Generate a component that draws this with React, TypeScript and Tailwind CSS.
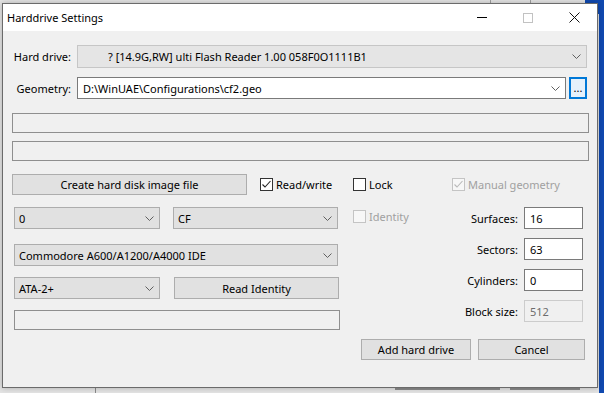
import React from "react";

const font = { fontFamily: '"Noto Sans", "Open Sans", sans-serif' };

function Chevron({ color = "#606060" }: { color?: string }) {
  return (
    <svg width="9" height="5" viewBox="0 0 9 5" className="shrink-0">
      <polyline points="0.5,0.5 4.5,4.5 8.5,0.5" fill="none" stroke={color} strokeWidth="1" />
    </svg>
  );
}

function Combo({
  w,
  text,
  variant = "grey",
  h = 22,
  textPad = 4,
}: {
  w: number;
  text: string;
  variant?: "grey" | "white" | "hd";
  h?: number;
  textPad?: number;
}) {
  const cls =
    variant === "white"
      ? "bg-white border-[#7a7a7a]"
      : variant === "hd"
      ? "bg-[#e5e5e5] border-[#c6c6c6]"
      : "bg-[#e1e1e1] border-[#adadad]";
  return (
    <div
      className={`flex items-center justify-between border pr-[5px] text-[11px] text-black ${cls}`}
      style={{ width: w, height: h, paddingLeft: textPad }}
    >
      <span className="whitespace-nowrap leading-none">{text}</span>
      <Chevron />
    </div>
  );
}

function Button({ w, text, h = 21 }: { w: number; text: string; h?: number }) {
  return (
    <div
      className="flex items-center justify-center border border-[#adadad] bg-[#e1e1e1] text-[11px] text-black"
      style={{ width: w, height: h }}
    >
      <span className="whitespace-nowrap leading-none">{text}</span>
    </div>
  );
}

function Check({
  checked,
  disabled,
  label,
}: {
  checked?: boolean;
  disabled?: boolean;
  label: string;
}) {
  const border = disabled ? "border-[#c4c4c4] bg-[#f7f7f7]" : "border-[#333333] bg-white";
  const mark = disabled ? "#b9b9b9" : "#222222";
  return (
    <div className="flex items-center gap-[3px]">
      <div className={`flex h-[13px] w-[13px] items-center justify-center border ${border}`}>
        {checked && (
          <svg width="11" height="11" viewBox="0 0 11 11">
            <polyline points="1.5,5.5 4,8 9.5,2" fill="none" stroke={mark} strokeWidth="1.1" />
          </svg>
        )}
      </div>
      <span className={`whitespace-nowrap text-[11px] leading-none ${disabled ? "text-[#a0a0a0]" : "text-black"}`}>
        {label}
      </span>
    </div>
  );
}

function Field({ w, h = 20 }: { w: number; h?: number }) {
  return <div className="border border-[#8f8f8f] bg-[#f0f0f0]" style={{ width: w, height: h }} />;
}

function NumRow({ label, value, disabled }: { label: string; value: string; disabled?: boolean }) {
  return (
    <div className="flex items-center justify-end gap-[6px]">
      <span className="whitespace-nowrap text-[11px] leading-none text-black">{label}</span>
      <div
        className={`flex h-[22px] w-[59px] items-center border pl-[5px] text-[11px] ${
          disabled ? "border-[#cccccc] bg-[#f0f0f0] text-[#6d6d6d]" : "border-[#7a7a7a] bg-white text-black"
        }`}
      >
        <span className="leading-none">{value}</span>
      </div>
    </div>
  );
}

export default function App() {
  return (
    <div className="relative h-[393px] w-[604px] overflow-hidden bg-[#e4e4e4]" style={font}>
      {/* desktop background pieces */}
      <div className="absolute right-0 top-0 h-[393px] w-[5px] bg-[#1049b0]" />
      <div className="absolute left-[585px] top-0 h-[14px] w-[19px] bg-[#1049b0]" />
      <div className="absolute left-[490px] top-0 h-[4px] w-px bg-[#a0a0a0]" />
      <div className="absolute left-[530px] top-0 h-[4px] w-px bg-[#a0a0a0]" />
      <div className="absolute left-[95px] top-[388px] h-[5px] w-px bg-[#8a8a8a]" />
      <div className="absolute left-[395px] top-[388px] h-[2px] w-[105px] bg-[#8a8a8a]" />
      <div className="absolute left-[510px] top-[388px] h-[2px] w-[70px] bg-[#8a8a8a]" />

      {/* dialog window */}
      <div className="absolute left-[2px] top-[3px] flex h-[385px] w-[596px] flex-col border border-[#6b6b6b] bg-[#f0f0f0] shadow-[0_0_6px_rgba(0,0,0,0.25)]">
        {/* title bar */}
        <div className="flex h-[27px] shrink-0 items-center bg-white">
          <span className="pl-[4px] text-[11px] leading-none text-black">Harddrive Settings</span>
          <div className="ml-auto flex h-full items-center">
            <div className="flex h-full w-[46px] items-center justify-center">
              <div className="h-px w-[10px] bg-black" />
            </div>
            <div className="flex h-full w-[46px] items-center justify-center">
              <div className="h-[10px] w-[10px] border border-[#c2c2c2]" />
            </div>
            <div className="flex h-full w-[46px] items-center justify-center">
              <svg width="11" height="11" viewBox="0 0 11 11">
                <line x1="0.5" y1="0.5" x2="10.5" y2="10.5" stroke="#111" strokeWidth="1" />
                <line x1="10.5" y1="0.5" x2="0.5" y2="10.5" stroke="#111" strokeWidth="1" />
              </svg>
            </div>
          </div>
        </div>

        {/* body */}
        <div className="flex flex-col pl-[9px]">
          {/* Hard drive */}
          <div className="mt-[14px] flex items-center gap-[6px]">
            <span className="w-[59px] whitespace-nowrap text-right text-[11px] leading-none text-black">Hard drive:</span>
            <Combo w={510} h={23} variant="hd" text="? [14.9G,RW] ulti Flash Reader 1.00 058F0O1111B1" textPad={30} />
          </div>

          {/* Geometry */}
          <div className="mt-[9px] flex items-center">
            <span className="w-[59px] whitespace-nowrap text-right text-[11px] leading-none text-black">Geometry:</span>
            <div className="ml-[6px]">
              <Combo w={489} variant="white" text="D:\WinUAE\Configurations\cf2.geo" textPad={5} />
            </div>
            <div className="ml-[3px] flex h-[22px] w-[18px] items-end justify-center border-2 border-[#0078d7] bg-[#e5f1fb] pb-[4px]">
              <span className="text-[11px] leading-none text-black">...</span>
            </div>
          </div>

          <div className="mt-[14px]">
            <Field w={577} />
          </div>
          <div className="mt-[8px]">
            <Field w={577} />
          </div>

          {/* create row */}
          <div className="mt-[13px] flex items-center">
            <Button w={235} text="Create hard disk image file" />
            <div className="ml-[13px] w-[93px]">
              <Check checked label="Read/write" />
            </div>
            <div className="w-[99px]">
              <Check label="Lock" />
            </div>
            <Check checked disabled label="Manual geometry" />
          </div>

          {/* lower area */}
          <div className="mt-[12px] flex">
            <div className="ml-[2px] flex w-[326px] flex-col">
              <div className="flex gap-[13px]">
                <Combo w={146} text="0" />
                <Combo w={165} text="CF" />
              </div>
              <div className="mt-[15px]">
                <Combo w={324} text="Commodore A600/A1200/A4000 IDE" />
              </div>
              <div className="mt-[11px] flex gap-[14px]">
                <Combo w={146} text="ATA-2+" />
                <Button w={165} h={22} text="Read Identity" />
              </div>
              <div className="mt-[11px]">
                <Field w={326} />
              </div>
            </div>
            <div className="ml-[13px] mt-[3px] w-[100px]">
              <Check disabled label="Identity" />
            </div>
            <div className="flex w-[130px] flex-col gap-[9px]">
              <NumRow label="Surfaces:" value="16" />
              <NumRow label="Sectors:" value="63" />
              <NumRow label="Cylinders:" value="0" />
              <NumRow label="Block size:" value="512" disabled />
            </div>
          </div>

          {/* bottom buttons */}
          <div className="mt-[9px] flex pl-[349px]">
            <Button w={110} text="Add hard drive" />
            <div className="ml-[7px]">
              <Button w={107} text="Cancel" />
            </div>
          </div>
        </div>
      </div>
    </div>
  );
}
